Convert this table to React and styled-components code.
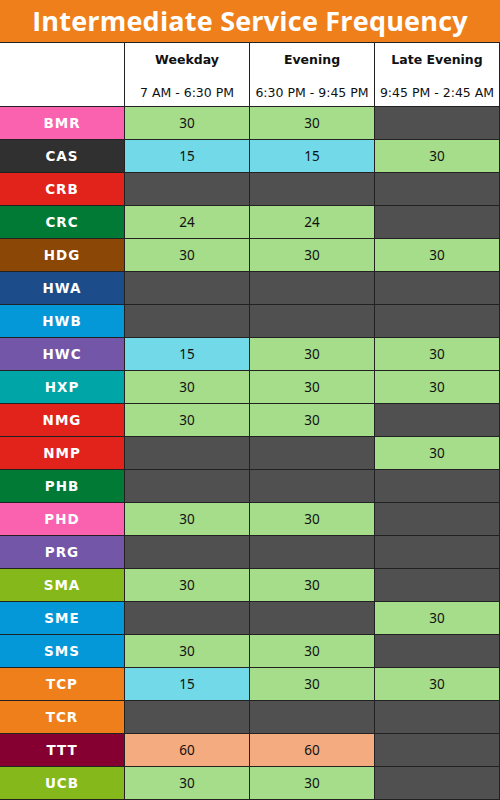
import React from 'react';
import styled, { createGlobalStyle } from 'styled-components';

const Global = createGlobalStyle`
  html, body { margin: 0; padding: 0; background: #fff; }
`;

const Page = styled.div`
  width: 500px;
  height: 800px;
  display: grid;
  grid-template-columns: repeat(4, 125px);
  grid-template-rows: 43px 64px repeat(21, 33px);
  font-family: "DejaVu Sans", Verdana, sans-serif;
  overflow: hidden;
`;

const Title = styled.div`
  grid-column: 1 / -1;
  background: #ee7f1b;
  color: #fff;
  border-bottom: 1px solid #222;
  display: flex;
  align-items: center;
  justify-content: center;
  font-family: "Open Sans", sans-serif;
  font-weight: 700;
  font-size: 27px;
  letter-spacing: 0.2px;
  padding-bottom: 2px;
`;

const Cell = styled.div`
  box-sizing: border-box;
  border-right: 1px solid #222;
  border-bottom: 1px solid #222;
  display: flex;
  align-items: center;
  justify-content: center;
  background: ${(p) => p.$bg || '#fff'};
  color: #111;
  font-size: 13px;
`;

const HeadCell = styled(Cell)`
  flex-direction: column;
  justify-content: space-between;
  padding: 9px 0 6px;
  font-size: 12.5px;
  white-space: nowrap;
  b { font-weight: 700; }
`;

const Label = styled(Cell)`
  color: #fff;
  font-weight: 700;
  font-size: 13.5px;
  letter-spacing: 1px;
`;

const Value = styled(Cell)`
  font-family: "Noto Sans", sans-serif;
  font-size: 13.5px;
`;

const FILL = {
  g: '#a5dd8b',
  c: '#72d9e8',
  d: '#505050',
  s: '#f4ab80',
};

const rows = [
  ['BMR', '#fa62b0', [['30', 'g'], ['30', 'g'], ['', 'd']]],
  ['CAS', '#303030', [['15', 'c'], ['15', 'c'], ['30', 'g']]],
  ['CRB', '#e1231b', [['', 'd'], ['', 'd'], ['', 'd']]],
  ['CRC', '#007a35', [['24', 'g'], ['24', 'g'], ['', 'd']]],
  ['HDG', '#8a4705', [['30', 'g'], ['30', 'g'], ['30', 'g']]],
  ['HWA', '#1c4d8a', [['', 'd'], ['', 'd'], ['', 'd']]],
  ['HWB', '#0598d8', [['', 'd'], ['', 'd'], ['', 'd']]],
  ['HWC', '#7456a8', [['15', 'c'], ['30', 'g'], ['30', 'g']]],
  ['HXP', '#00a5a8', [['30', 'g'], ['30', 'g'], ['30', 'g']]],
  ['NMG', '#e1231b', [['30', 'g'], ['30', 'g'], ['', 'd']]],
  ['NMP', '#e1231b', [['', 'd'], ['', 'd'], ['30', 'g']]],
  ['PHB', '#007a35', [['', 'd'], ['', 'd'], ['', 'd']]],
  ['PHD', '#fa62b0', [['30', 'g'], ['30', 'g'], ['', 'd']]],
  ['PRG', '#7456a8', [['', 'd'], ['', 'd'], ['', 'd']]],
  ['SMA', '#85b81a', [['30', 'g'], ['30', 'g'], ['', 'd']]],
  ['SME', '#0598d8', [['', 'd'], ['', 'd'], ['30', 'g']]],
  ['SMS', '#0598d8', [['30', 'g'], ['30', 'g'], ['', 'd']]],
  ['TCP', '#ee7f1b', [['15', 'c'], ['30', 'g'], ['30', 'g']]],
  ['TCR', '#ee7f1b', [['', 'd'], ['', 'd'], ['', 'd']]],
  ['TTT', '#850030', [['60', 's'], ['60', 's'], ['', 'd']]],
  ['UCB', '#85b81a', [['30', 'g'], ['30', 'g'], ['', 'd']]],
];

const periods = [
  ['Weekday', '7 AM - 6:30 PM'],
  ['Evening', '6:30 PM - 9:45 PM'],
  ['Late Evening', '9:45 PM - 2:45 AM'],
];

export default function App() {
  return (
    <>
      <Global />
      <Page>
        <Title>Intermediate Service Frequency</Title>
        <Cell />
        {periods.map(([name, hours]) => (
          <HeadCell key={name}>
            <b>{name}</b>
            <span>{hours}</span>
          </HeadCell>
        ))}
        {rows.map(([code, color, cells]) => (
          <React.Fragment key={code}>
            <Label $bg={color}>{code}</Label>
            {cells.map(([v, f], i) => (
              <Value key={i} $bg={FILL[f]}>{v}</Value>
            ))}
          </React.Fragment>
        ))}
      </Page>
    </>
  );
}
